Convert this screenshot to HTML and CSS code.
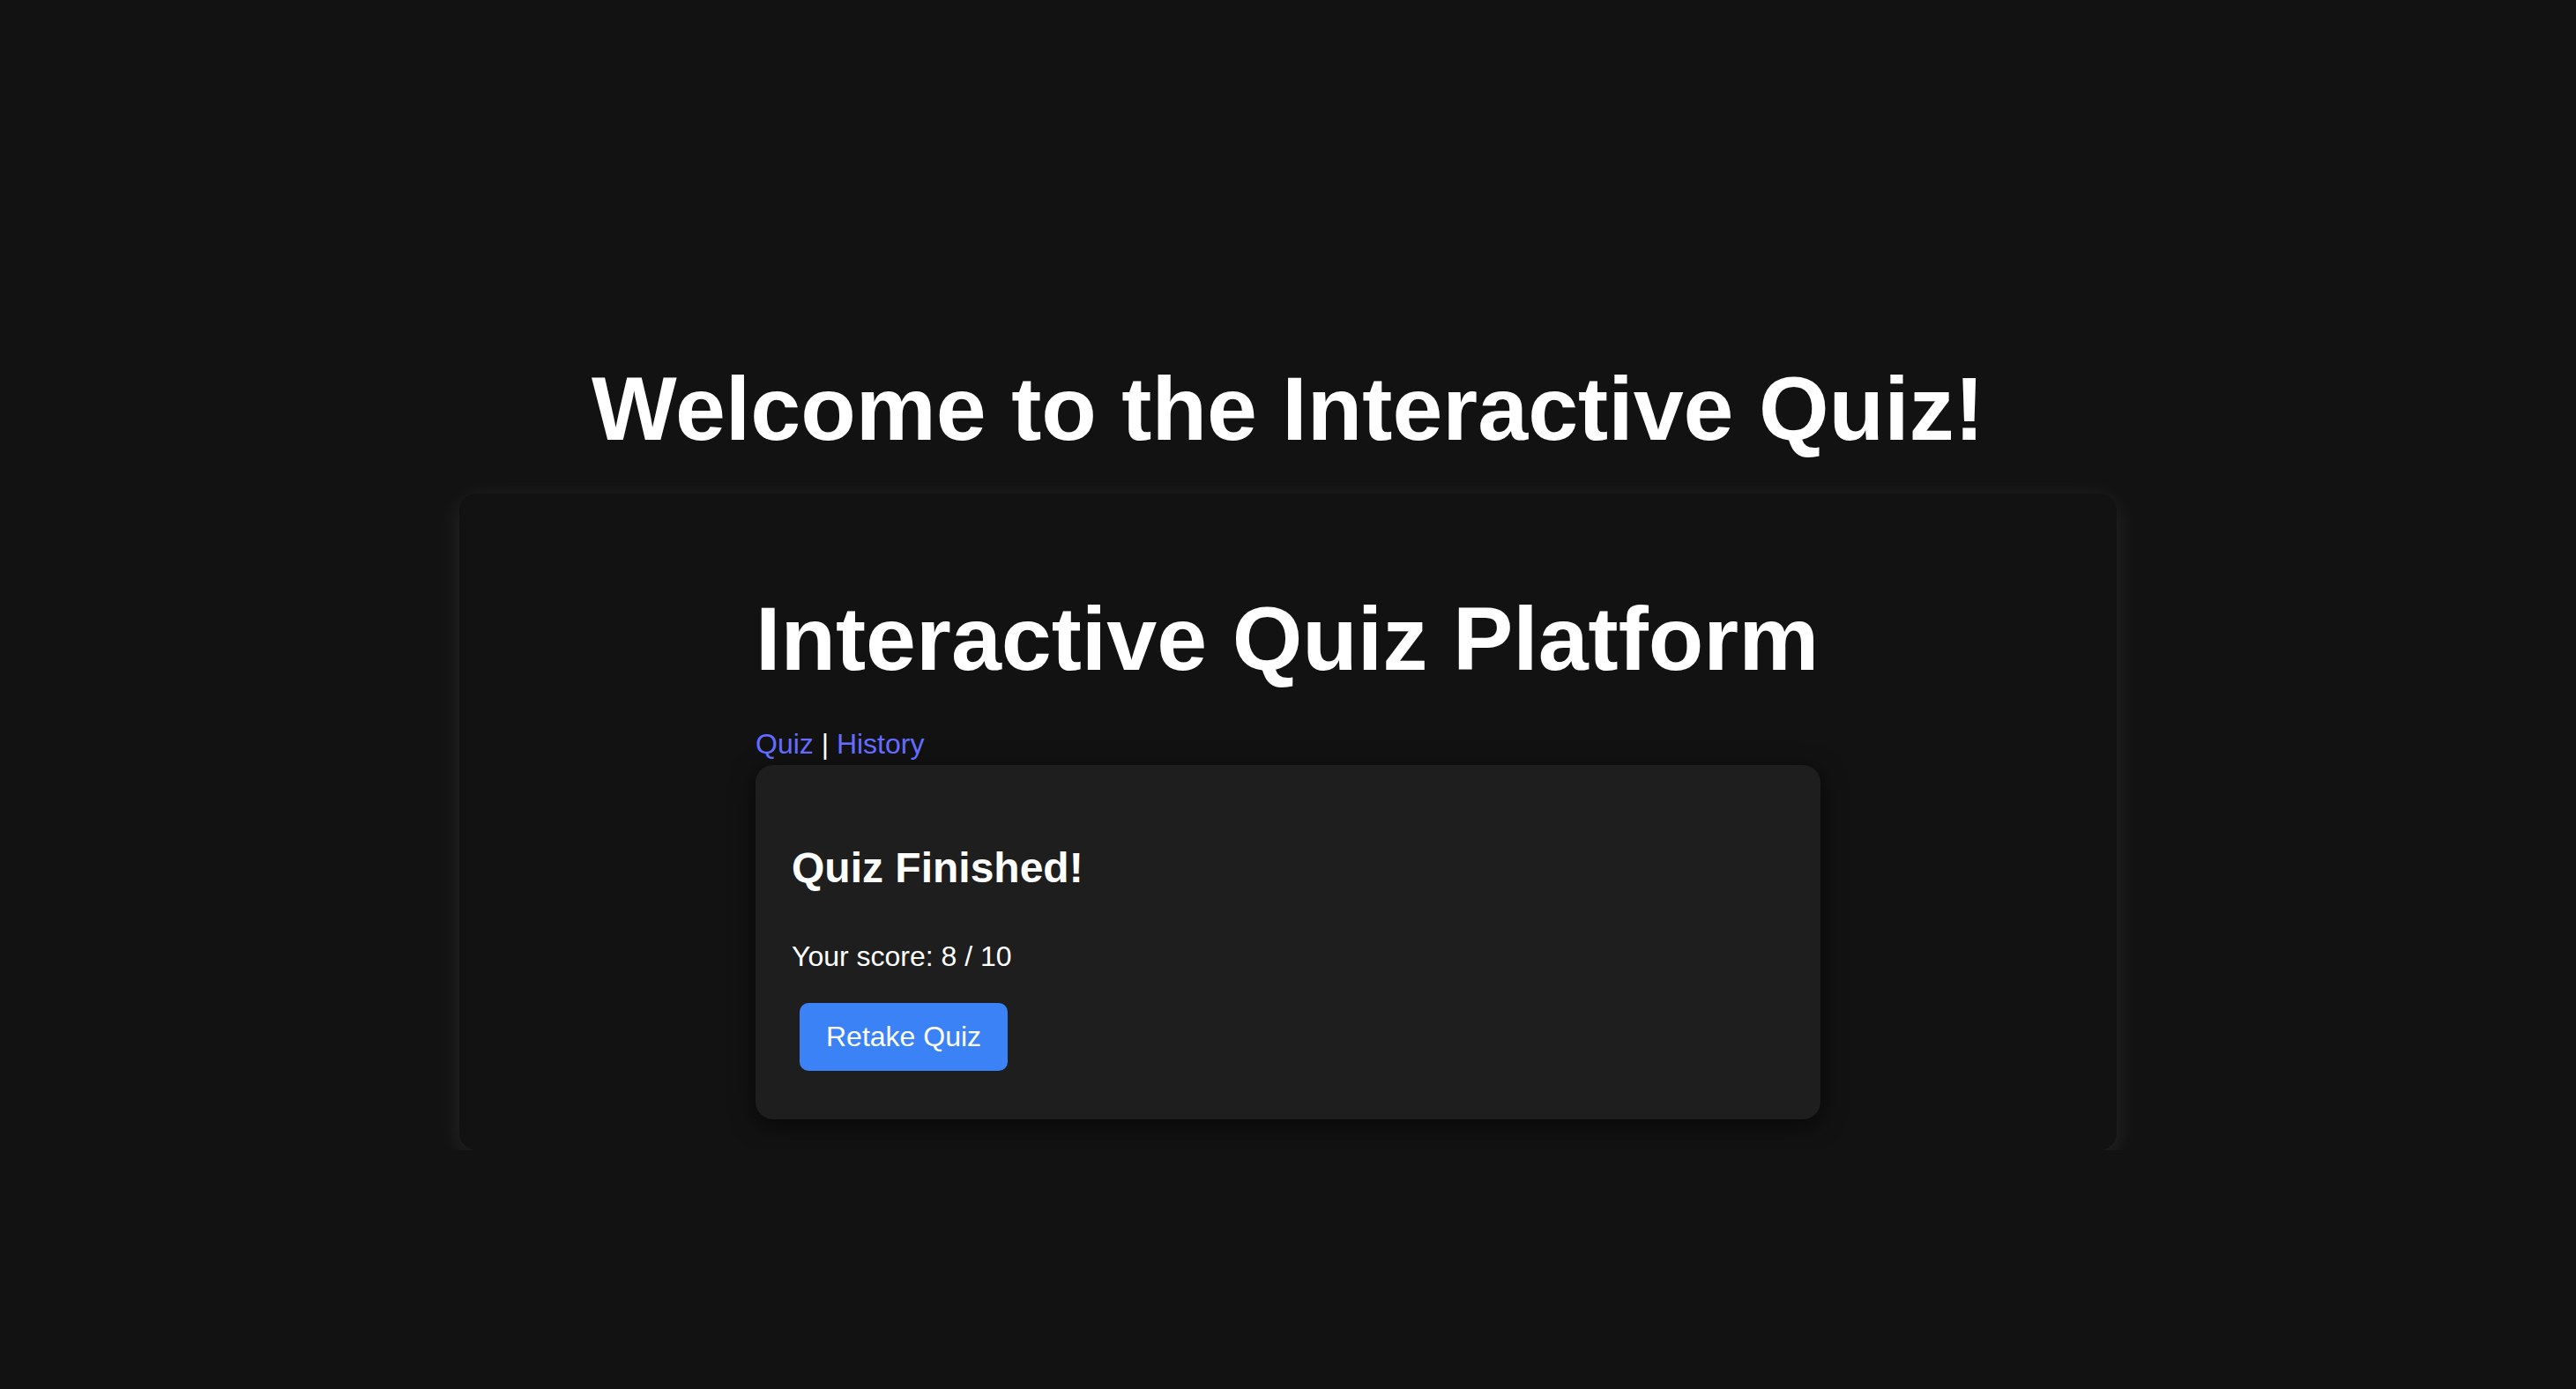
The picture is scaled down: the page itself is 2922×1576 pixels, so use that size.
FILE: index.html
```html
<!DOCTYPE html>
<html lang="en">
<head>
<meta charset="utf-8">
<title>Interactive Quiz</title>
<link rel="stylesheet" href="styles.css">
</head>
<body>
<main class="page">
  <h1 class="title">Welcome to the Interactive Quiz!</h1>
  <section class="shell">
    <div class="app">
      <h1 class="app-title">Interactive Quiz Platform</h1>
      <nav class="nav"><a href="#">Quiz</a> | <a href="#">History</a></nav>
      <div class="result">
        <h2 class="result-title">Quiz Finished!</h2>
        <p class="score">Your score: 8 / 10</p>
        <button class="retake" type="button">Retake Quiz</button>
      </div>
    </div>
  </section>
</main>
</body>
</html>
```

FILE: styles.css
```css
body {
  margin: 0;
  background: #121212;
  color: #fff;
  font-family: "Liberation Sans", Arial, sans-serif;
  font-size: 32px;
  line-height: 1.5;
}

.page {
  display: flex;
  flex-direction: column;
  align-items: center;
  padding-top: 408px;
}

.title {
  font-size: 102.4px;
  line-height: 1.1;
  font-weight: 700;
  margin: 0 0 39px;
}

.shell {
  width: 1880px;
  box-sizing: border-box;
  background: #121212;
  border-radius: 20px;
  box-shadow: 0 6px 28px rgba(255, 255, 255, 0.09);
  padding: 40px 0 35px;
}

.app {
  width: 1208px;
  margin: 0 auto;
}

.app-title {
  font-size: 102.4px;
  line-height: 1.1;
  font-weight: 700;
  margin: 69px 0 0;
}

.nav {
  margin-top: 39px;
}

.nav a {
  color: #646cff;
  text-decoration: none;
}

.result {
  background: #1e1e1e;
  border-radius: 20px;
  padding: 41px 41px 55px;
  box-shadow: 0 6px 28px rgba(0, 0, 0, 0.6);
}

.result-title {
  font-size: 48px;
  line-height: 1.5;
  font-weight: 700;
  margin: 40px 0;
}

.score {
  margin: 0 0 29px;
}

.retake {
  display: block;
  margin-left: 9px;
  font-family: inherit;
  font-size: 32px;
  line-height: normal;
  padding: 20px 30px;
  border: 0;
  border-radius: 10px;
  background: #3b82f6;
  color: #fff;
  cursor: pointer;
}
```
